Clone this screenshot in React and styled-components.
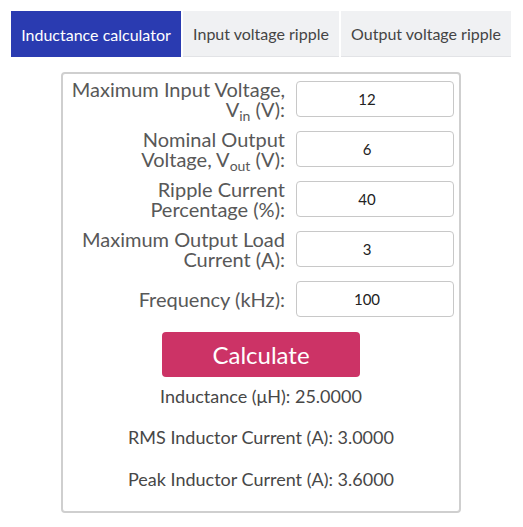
import { Fragment } from "react";
import styled, { createGlobalStyle } from "styled-components";

const GlobalStyle = createGlobalStyle`
  body {
    margin: 0;
    background: #fff;
    font-family: Lato, "Open Sans", sans-serif;
  }
`;

const Page = styled.div`
  padding: 11px 12px 0 11px;
`;

const Tabs = styled.div`
  display: flex;
  gap: 2px;
`;

const Tab = styled.div`
  height: 46px;
  display: flex;
  align-items: center;
  justify-content: center;
  width: ${(p) => p.w}px;
  font-size: 16px;
  background: ${(p) => (p.active ? "#2a3bb1" : "#f0f1f3")};
  color: ${(p) => (p.active ? "#fff" : "#444")};
  border-bottom: ${(p) => (p.active ? "none" : "1px solid #e2e3e6")};
  box-sizing: border-box;
`;

const Card = styled.div`
  margin: 15px 0 0 50px;
  width: 400px;
  box-sizing: border-box;
  border: 2px solid #cfcfcf;
  border-radius: 4px;
  padding: 5px 5px 22px 8px;
`;

const Form = styled.div`
  display: grid;
  grid-template-columns: 1fr 158px;
  column-gap: 11px;
  row-gap: 10px;
  align-items: center;
`;

const Label = styled.div`
  text-align: right;
  font-size: 20px;
  line-height: 20px;
  color: #585858;
  min-height: 40px;
  display: flex;
  align-items: center;
  justify-content: flex-end;
`;

const Sub = styled.sub`
  font-size: 14px;
  vertical-align: -4px;
  line-height: 0;
`;

const Input = styled.input`
  width: 158px;
  height: 36px;
  box-sizing: border-box;
  border: 1px solid #c8c8c8;
  border-radius: 4px;
  padding: 0 16px 0 0;
  text-align: center;
  font-family: Lato, sans-serif;
  font-size: 15px;
  color: #222;
  &:focus {
    outline: none;
  }
`;

const Actions = styled.div`
  display: flex;
  flex-direction: column;
  align-items: center;
  margin-top: 13px;
  padding-right: 3px;
`;

const Button = styled.button`
  width: 198px;
  height: 45px;
  border: none;
  border-radius: 4px;
  background: #cc3366;
  color: #fff;
  font-family: Lato, sans-serif;
  font-size: 24px;
  cursor: pointer;
`;

const Result = styled.div`
  font-size: 18px;
  color: #474747;
  line-height: 20px;
  margin-top: ${(p) => p.top}px;
`;

const fields = [
  { label: <>Maximum Input Voltage,<br />V<Sub>in</Sub> (V):</>, value: "12" },
  { label: <>Nominal Output<br />Voltage, V<Sub>out</Sub> (V):</>, value: "6" },
  { label: <>Ripple Current<br />Percentage (%):</>, value: "40" },
  { label: <>Maximum Output Load<br />Current (A):</>, value: "3" },
  { label: <>Frequency (kHz):</>, value: "100" },
];

export default function App() {
  return (
    <Page>
      <GlobalStyle />
      <Tabs>
        <Tab active w={170}>Inductance calculator</Tab>
        <Tab w={156}>Input voltage ripple</Tab>
        <Tab w={170}>Output voltage ripple</Tab>
      </Tabs>
      <Card>
        <Form>
          {fields.map((f, i) => (
            <Fragment key={i}>
              <Label>
                <span>{f.label}</span>
              </Label>
              <Input defaultValue={f.value} />
            </Fragment>
          ))}
        </Form>
        <Actions>
          <Button>Calculate</Button>
          <Result top={9}>Inductance (μH): 25.0000</Result>
          <Result top={21}>RMS Inductor Current (A): 3.0000</Result>
          <Result top={22}>Peak Inductor Current (A): 3.6000</Result>
        </Actions>
      </Card>
    </Page>
  );
}
